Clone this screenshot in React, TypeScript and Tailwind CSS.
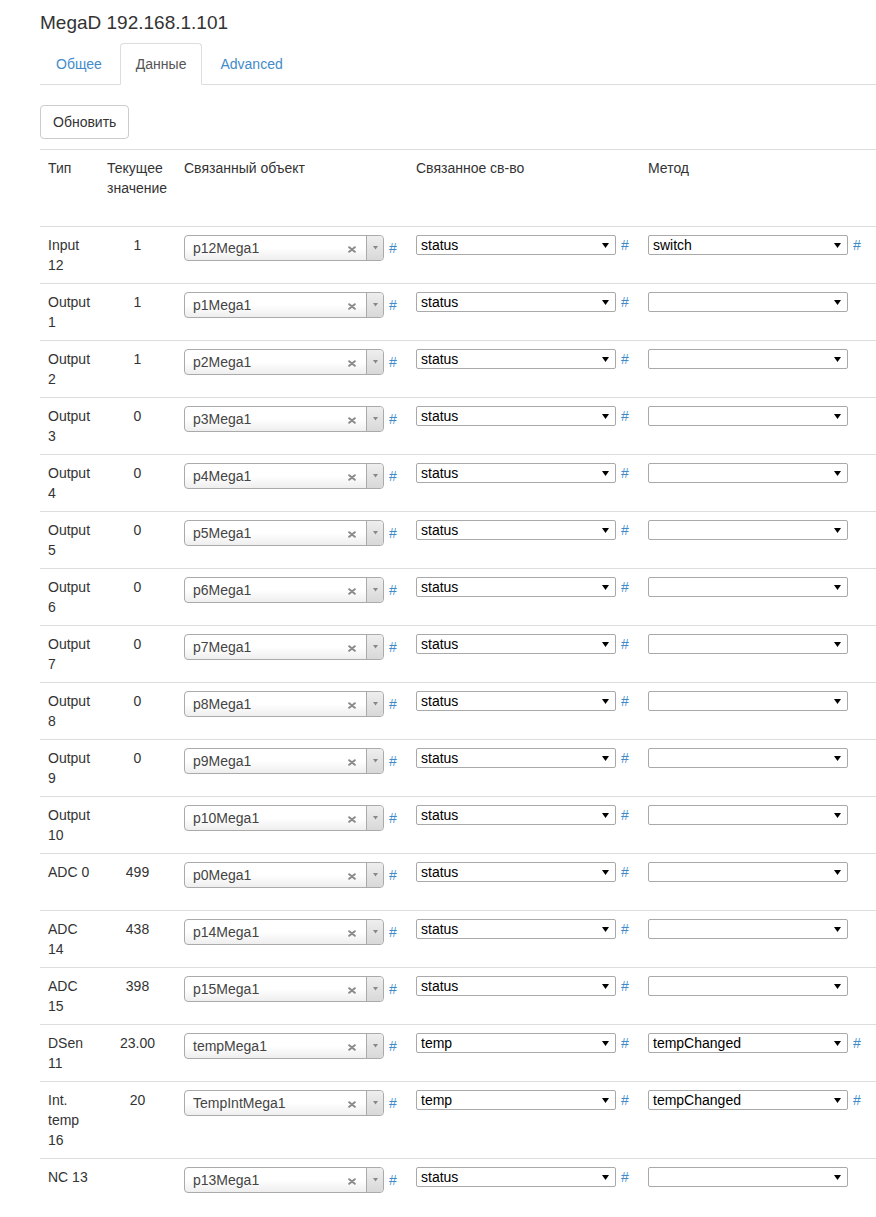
import React from "react";

type Row = {
  type: string[];
  value: string;
  obj: string;
  prop: string;
  method: string;
};

const outputs: Row[] = [1, 2, 3, 4, 5, 6, 7, 8, 9, 10].map((n) => ({
  type: ["Output", String(n)],
  value: n <= 2 ? "1" : n === 10 ? "" : "0",
  obj: `p${n}Mega1`,
  prop: "status",
  method: "",
}));

const rows: Row[] = [
  { type: ["Input", "12"], value: "1", obj: "p12Mega1", prop: "status", method: "switch" },
  ...outputs,
  { type: ["ADC 0"], value: "499", obj: "p0Mega1", prop: "status", method: "" },
  { type: ["ADC", "14"], value: "438", obj: "p14Mega1", prop: "status", method: "" },
  { type: ["ADC", "15"], value: "398", obj: "p15Mega1", prop: "status", method: "" },
  { type: ["DSen", "11"], value: "23.00", obj: "tempMega1", prop: "temp", method: "tempChanged" },
  { type: ["Int.", "temp", "16"], value: "20", obj: "TempIntMega1", prop: "temp", method: "tempChanged" },
  { type: ["NC 13"], value: "", obj: "p13Mega1", prop: "status", method: "" },
];

function Select2({ value }: { value: string }) {
  return (
    <div className="flex items-center gap-[5px]">
      <div className="flex h-[26px] w-[200px] items-stretch rounded-[4px] border border-[#aaa] bg-gradient-to-b from-white from-50% to-[#eee]">
        <div className="flex flex-1 items-center pl-[8px] text-[14px] leading-[20px] text-[#444]">
          {value}
        </div>
        <div className="mr-[7px] flex w-[14px] items-center justify-center pt-[2px]">
          <svg width="8" height="7" viewBox="0 0 8 7">
            <path d="M1.2 1.2 L6.8 5.8 M6.8 1.2 L1.2 5.8" stroke="#8a8a8a" strokeWidth="2" strokeLinecap="round" />
          </svg>
        </div>
        <div className="flex w-[17px] items-center justify-center rounded-r-[4px] border-l border-[#aaa] bg-gradient-to-b from-[#eee] to-[#d8d8d8]">
          <svg width="5" height="4" viewBox="0 0 5 4">
            <path d="M0 0 L5 0 L2.5 3.5 Z" fill="#888" />
          </svg>
        </div>
      </div>
      <span className="text-[14px] leading-[20px] text-[#428bca]">#</span>
    </div>
  );
}

function NativeSelect({ value, hash }: { value: string; hash: boolean }) {
  return (
    <div className="flex items-center gap-[5px]">
      <div className="flex h-[20px] w-[200px] items-center justify-between rounded-[2px] border border-[#a9a9a9] bg-white pl-[4px] pr-[6px]">
        <span className="text-[14px] leading-[18px] text-black">{value}</span>
        <svg width="7" height="5" viewBox="0 0 7 5">
          <path d="M0 0 L7 0 L3.5 5 Z" fill="#000" />
        </svg>
      </div>
      {hash && <span className="text-[14px] leading-[20px] text-[#428bca]">#</span>}
    </div>
  );
}

const grid = "grid grid-cols-[59px_77px_232px_232px_1fr]";

export default function App() {
  return (
    <div
      className="min-h-[1217px] bg-white pl-[40px] text-[14px] leading-[20px] text-[#333]"
      style={{ fontFamily: '"Liberation Sans", Arial, sans-serif' }}
    >
      <h4 className="pt-[12px] text-[19px] leading-[21px] font-normal text-[#333]">MegaD 192.168.1.101</h4>

      <ul className="mt-[10px] flex border-b border-[#ddd]">
        <li className="-mb-px mr-[2px]">
          <a className="block rounded-t-[4px] border border-transparent px-[15px] py-[10px] text-[#428bca]">Общее</a>
        </li>
        <li className="-mb-px mr-[2px]">
          <a className="block rounded-t-[4px] border border-[#ddd] border-b-transparent bg-white px-[15px] py-[10px] text-[#555]">
            Данные
          </a>
        </li>
        <li className="-mb-px mr-[2px]">
          <a className="block rounded-t-[4px] border border-transparent px-[15px] py-[10px] text-[#428bca]">Advanced</a>
        </li>
      </ul>

      <div className="mt-[20px]">
        <button className="h-[34px] rounded-[4px] border border-[#ccc] bg-white px-[12px] text-[14px] leading-[20px] text-[#333]">
          Обновить
        </button>
      </div>

      <div className="mt-[10px]">
        <div className={`${grid} h-[77px] border-t border-[#ddd]`}>
          <div className="p-[8px]">Тип</div>
          <div className="p-[8px]">
            Текущее
            <br />
            значение
          </div>
          <div className="p-[8px]">Связанный объект</div>
          <div className="p-[8px]">Связанное св-во</div>
          <div className="p-[8px]">Метод</div>
        </div>

        {rows.map((r, i) => (
          <div key={i} className={`${grid} min-h-[57px] border-t border-[#ddd]`}>
            <div className="p-[8px]">
              {r.type.map((t, j) => (
                <div key={j} className="whitespace-nowrap">
                  {t}
                </div>
              ))}
            </div>
            <div className="p-[8px] text-center">{r.value}</div>
            <div className="p-[8px]">
              <Select2 value={r.obj} />
            </div>
            <div className="p-[8px]">
              <NativeSelect value={r.prop} hash={true} />
            </div>
            <div className="p-[8px]">
              <NativeSelect value={r.method} hash={r.method !== ""} />
            </div>
          </div>
        ))}
      </div>
    </div>
  );
}
